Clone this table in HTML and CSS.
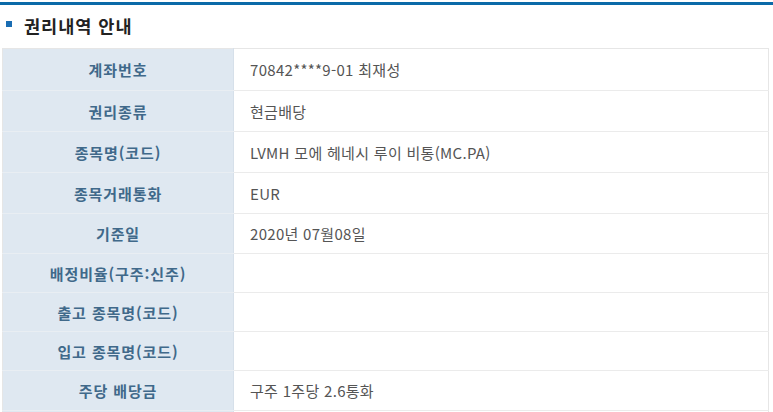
FILE: index.html
```html
<!DOCTYPE html>
<html lang="ko">
<head>
  <title>권리내역 안내</title>
  <meta name="viewport" content="width=device-width, initial-scale=1">
  <meta charset="UTF-8">
  <link rel="stylesheet" href="styles.css">
</head>
<body>
  <div class="wrap">
    <h2 class="title"><span class="bullet"></span>권리내역 안내</h2>

    <table class="info">
      <tr class="first"><th>계좌번호</th><td>70842****9-01 최재성</td></tr>
      <tr><th>권리종류</th><td>현금배당</td></tr>
      <tr><th>종목명(코드)</th><td>LVMH 모에 헤네시 루이 비통(MC.PA)</td></tr>
      <tr><th>종목거래통화</th><td>EUR</td></tr>
      <tr class="short"><th>기준일</th><td>2020년 07월08일</td></tr>
      <tr class="empty"><th>배정비율(구주:신주)</th><td></td></tr>
      <tr class="empty"><th>출고 종목명(코드)</th><td></td></tr>
      <tr class="empty"><th>입고 종목명(코드)</th><td></td></tr>
      <tr class="short"><th>주당 배당금</th><td>구주 1주당 2.6통화</td></tr>
      <tr><th></th><td></td></tr>
    </table>
  </div>
</body>
</html>
```

FILE: styles.css
```css
body {
  font-family: "Noto Sans CJK KR", "Noto Sans", sans-serif;
  margin: 0;
  padding: 0;
  background: #fff;
  overflow: hidden;
}
.wrap {
  width: 767px;
  padding: 0 4px 0 2px;
  border-top: 3px solid #0a6aa8;
  margin-top: 2px;
}
.title {
  display: flex;
  align-items: center;
  margin: 0;
  padding: 4px 0 0 4px;
  height: 36px;
  box-sizing: border-box;
  font-size: 17.5px;
  font-weight: bold;
  color: #222;
  letter-spacing: 1px;
}
.bullet {
  width: 6px;
  height: 6px;
  background: #1a6db3;
  margin-right: 12px;
  margin-bottom: 2px;
}
.info {
  width: 767px;
  margin-top: 7px;
  border-collapse: collapse;
  border: 1px solid #e6e6e6;
  font-size: 15px;
}
.info th {
  width: 230px;
  height: 40px;
  padding: 0;
  background: #dfe8f1;
  color: #40698a;
  font-weight: bold;
  letter-spacing: 0.9px;
  text-align: center;
  border-bottom: 1px solid #e9eef3;
  border-right: 1px solid #d6e0ea;
}
.info td {
  height: 40px;
  padding: 0 0 0 16px;
  color: #555;
  letter-spacing: 0.3px;
  border-bottom: 1px solid #ebebeb;
}
.info tr.first th,
.info tr.first td {
  height: 41px;
}
.info tr.short th,
.info tr.short td {
  height: 39px;
}
.info tr.empty th,
.info tr.empty td {
  height: 38px;
}
```
